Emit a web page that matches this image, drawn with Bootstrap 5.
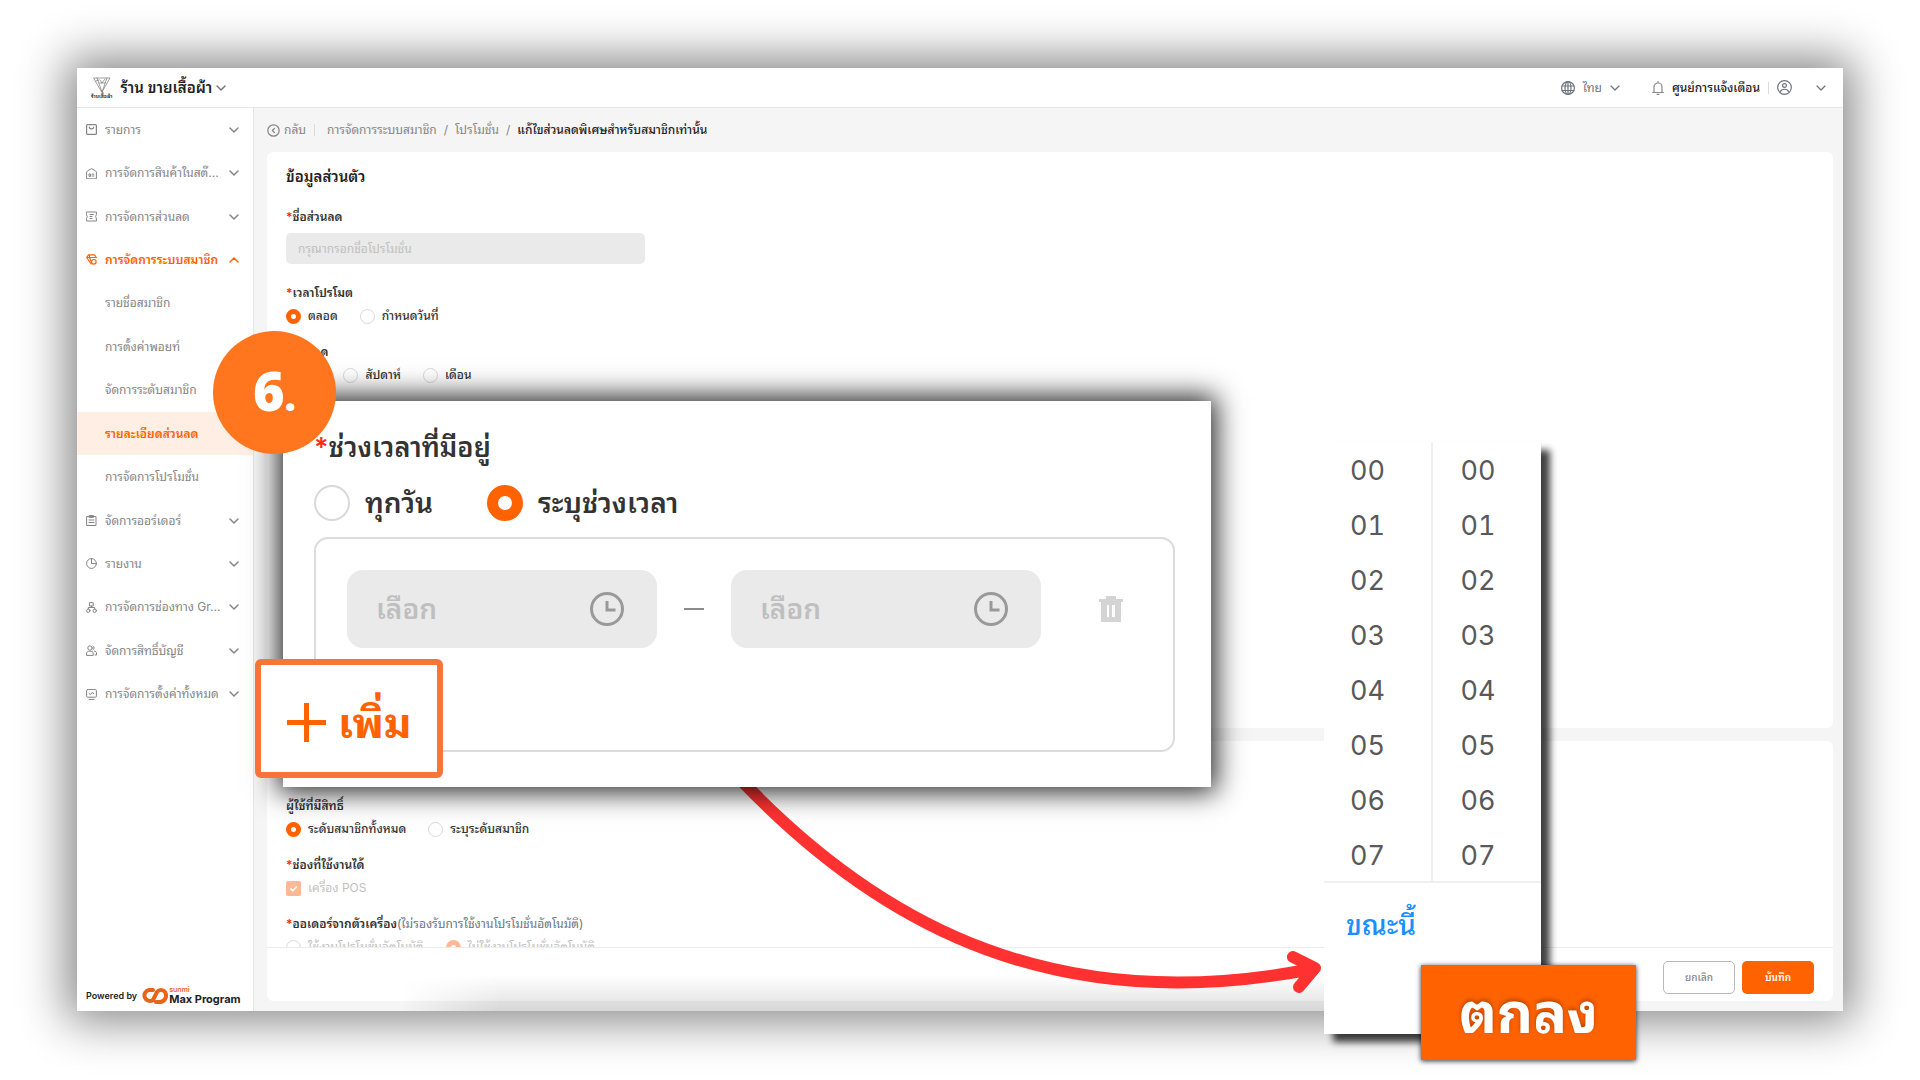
<!DOCTYPE html>
<html lang="th">
<head>
<meta charset="utf-8">
<meta name="viewport" content="width=device-width, initial-scale=1">
<title>แก้ไขส่วนลดพิเศษสำหรับสมาชิกเท่านั้น</title>
<link href="https://cdn.jsdelivr.net/npm/bootstrap@5.3.0/dist/css/bootstrap.min.css" rel="stylesheet">
<style>
:root { --brand: #ff6200; --ink: #333; --muted: #858585; --line: #e6e6e6; }
body { font-family: Inter, "Noto Sans Thai Looped", "Noto Looped Thai", Loma, "Noto Sans Thai", "Noto Sans", sans-serif; font-size: 12px; line-height: 20px; color: var(--ink); background: #fff; }
svg { fill: none; stroke: currentColor; stroke-width: 1.2; stroke-linecap: round; stroke-linejoin: round; flex: none; display: block; }
a { color: inherit; text-decoration: none; }
.stage { height: 100vh; padding: 68px 77px 69px; position: relative; overflow: hidden; }
.app-window { height: 100%; background: #f5f5f5; box-shadow: 0 0 44px 10px rgba(0,0,0,.48); }
.topbar { height: 40px; background: #fff; border-bottom: 1px solid var(--line); padding: 0 17px 0 14px; }
.shop-name { font-size: 15px; font-weight: 600; color: #222; }
.shop-tag { font-size: 5px; line-height: 6px; font-weight: 700; }
.notice { font-weight: 500; color: #222; }
.side { width: 177px; background: #fff; border-right: 1px solid var(--line); color: var(--muted); font-weight: 400; }
.side-list { height: 608px; }
.side-list li { flex: 1 1 0; }
.side-list a { height: 100%; padding: 0 14px 0 9px; gap: 8px; }
.side-list a.sub-item { padding-left: 28px; }
.side-list a.opened { color: var(--brand); font-weight: 600; }
.side-list a.current { background: #ffeee4; }
.side-list use { stroke-width: 1.5; }
.powered { padding: 0 8px 6px 9px; color: #222; font-size: 9px; font-weight: 600; line-height: 14px; white-space: nowrap; }
.maker { color: #e8641b; font-size: 7px; line-height: 6px; }
.product { font-size: 11px; line-height: 12px; font-weight: 700; }
.crumbs { height: 44px; padding-left: 13px; color: var(--muted); }
.crumbs .slash { margin: 0 7px; }
.crumbs .here { font-weight: 500; color: #222; }
.rule-v { width: 1px; height: 12px; background: #dcdcdc; }
.sheet { background: #fff; margin: 0 10px 0 13px; padding: 13px 19px 0; border-radius: 6px; }
.sheet-main { height: 576px; flex: none; }
.sheet-rest { margin-top: 13px; padding-top: 55px; border-radius: 6px 6px 0 0; flex: 1 1 0; min-height: 0; overflow: hidden; }
.sheet-foot { background: #fff; margin: 0 10px 10px 13px; padding: 5px 19px 0; height: 54px; flex: none; border-top: 1px solid #ececec; border-radius: 0 0 6px 6px; }
.sheet h1 { font-size: 15px; line-height: 24px; font-weight: 600; margin: 0 0 18px; color: #222; }
.group { border: 0; margin: 0 0 16px; padding: 0; }
.group > legend, .group > .cap { float: none; font-size: 12px; line-height: 20px; font-weight: 600; margin: 0 0 3px; display: block; }
.req { color: #ff2a1a; }
.text-in { width: 359px; height: 31px; border: 0; border-radius: 5px; background: #eaeaea; padding: 0 12px; margin: 6px 0 19px; display: block; }
.text-in::placeholder, .time-in input::placeholder { color: #bfbfbf; opacity: 1; }
.opts { gap: 22px; height: 20px; }
.opts label { gap: 7px; font-weight: 500; }
.opts .off { color: #bfbfbf; font-weight: 400; }
.dot { appearance: none; width: 15px; height: 15px; border: 1px solid #d9d9d9; border-radius: 50%; background: #fff; margin: 0; flex: none; }
.dot:checked { border: 5px solid var(--brand); }
.off .dot:checked { border-color: #ffb895; }
.tick { appearance: none; width: 15px; height: 15px; border-radius: 2px; margin: 0; flex: none; background: #ffb895 url("data:image/svg+xml,%3Csvg xmlns='http://www.w3.org/2000/svg' viewBox='0 0 15 15'%3E%3Cpath d='M4.5 7.5l2.3 2.3 4-4.3' fill='none' stroke='white' stroke-width='1.8'/%3E%3C/svg%3E"); }
.foot-btn { width: 72px; height: 33px; border-radius: 5px; font-size: 10px; font-weight: 500; padding: 0; }
.btn-plain { border: 1px solid #b9b9b9; color: var(--muted); background: #fff; margin-right: 7px; }
.btn-brand { background: var(--brand); color: #fff; border: 0; font-weight: 600; }
/* call-outs laid over the window */
.over { position: absolute; }
.haze { left: 400px; top: 975px; width: 924px; height: 36px; background: linear-gradient(rgba(0,0,0,0), rgba(0,0,0,.12)); -webkit-mask-image: linear-gradient(90deg, transparent, #000 100px); mask-image: linear-gradient(90deg, transparent, #000 100px); }
.arrow { left: 0; top: 0; width: 1920px; height: 1080px; stroke: #ff3131; stroke-width: 12; }
.zoom-pane { left: 283px; top: 401px; width: 928px; height: 386px; background: #fff; padding: 24px 36px 0 31px; box-shadow: 0 0 26px 5px rgba(0,0,0,.85); }
.zoom-title { font-size: 27px; line-height: 46px; font-weight: 600; margin: 0 0 14px; }
.zoom-opts { height: 36px; gap: 54px; margin-bottom: 16px; }
.zoom-opts label { gap: 15px; font-size: 28px; line-height: 36px; font-weight: 600; }
.zoom-opts .dot { width: 36px; height: 36px; border-width: 2px; }
.zoom-opts .dot:checked { border-width: 11px; }
.slot { height: 215px; border: 2px solid #dcdcdc; border-radius: 14px; padding: 31px; }
.time-in { width: 310px; height: 78px; border-radius: 16px; background: #eaeaea; padding: 0 33px 0 29px; color: #999; }
.time-in input { border: 0; background: none; min-width: 0; flex: 1; font-size: 28px; line-height: 40px; padding: 0; font-weight: 600; }
.dash { width: 20px; height: 2px; background: #8c8c8c; margin: 0 27px; }
.bin { border: 0; background: none; padding: 0; margin-left: 57px; color: #d4d4d4; }
.add-box { left: 255px; top: 659px; width: 188px; height: 119px; border: 6px solid #f97437; border-radius: 6px; background: #fff; color: var(--brand); font-size: 42px; line-height: 60px; font-weight: 700; padding: 8px 0 0 26px; gap: 12px; }
.step { left: 213px; top: 331px; width: 123px; height: 123px; border-radius: 50%; background: #ff761f; color: #fff; font-family: "Open Sans", sans-serif; font-size: 54px; line-height: 60px; font-weight: 800; }
.step small { font-size: 40px; }
.picker { left: 1324px; top: 442px; width: 217px; height: 592px; background: #fff; box-shadow: 9px 8px 7px rgba(0,0,0,.75); color: #595959; font-size: 27px; font-variant-numeric: tabular-nums; }
.picker-cols { height: 441px; border-bottom: 2px solid #f0f0f0; }
.picker-cols ul { flex: 1 1 0; padding: 1px 0 0 26px; line-height: 55px; }
.picker-cols ul + ul { border-left: 2px solid #f0f0f0; padding-left: 28px; }
.now { border: 0; background: none; color: #1890ff; font-size: 28px; line-height: 44px; font-weight: 500; padding: 0; margin: 20px 0 0 22px; }
.confirm { left: 1421px; top: 965px; width: 215px; height: 95px; border: 0; background: var(--brand); color: #fff; font-size: 56px; line-height: 80px; font-weight: 700; box-shadow: 0 1px 5px rgba(0,0,0,.8); text-shadow: 0 -2px 4px rgba(0,0,0,.3); padding: 0; }
</style>
</head>
<body>
<svg class="d-none" aria-hidden="true">
  <symbol id="down" viewBox="0 0 10 10"><path d="M1 3l4 4 4-4"/></symbol>
  <symbol id="up" viewBox="0 0 10 10"><path d="M1 7l4-4 4 4"/></symbol>
  <symbol id="clock" viewBox="0 0 34 34"><circle cx="17" cy="17" r="15.5"/><path d="M17 9v9h8.500" stroke-linecap="butt" stroke-linejoin="miter"/></symbol>
</svg>
<div class="stage">
  <div class="app-window d-flex flex-column">
    <header class="topbar d-flex align-items-center">
      <a href="#" class="d-flex align-items-center">
        <span class="d-flex flex-column align-items-center">
          <svg width="20" height="16" viewBox="0 0 20 16" color="#777"><path d="M2 1h16L10 15zM5 1l5 14 5-14M7 6l6 0M4 4l3-1M8 3l2 3 3-4" stroke-width=".7"/></svg>
          <span class="shop-tag">ร้านเสื้อผ้า</span>
        </span>
        <span class="shop-name ms-1 me-1 ps-1">ร้าน ขายเสื้อผ้า</span>
        <svg width="10" height="10" color="#777" style="stroke-width:1.5"><use href="#down"/></svg>
      </a>
      <nav class="d-flex align-items-center ms-auto">
        <a href="#" class="d-flex align-items-center text-secondary">
          <svg width="14" height="14" viewBox="0 0 14 14"><circle cx="7" cy="7" r="6.400"/><ellipse cx="7" cy="7" rx="3" ry="6.400"/><path d="M7 .6v12.800M1 5h12M1 9.500h12"/></svg>
          <span class="mx-2">ไทย</span>
          <svg width="10" height="10"><use href="#down"/></svg>
        </a>
        <a href="#" class="notice d-flex align-items-center ps-4 ms-2">
          <svg width="12" height="14" viewBox="0 0 12 14" color="#888"><path d="M.7 11.500h10.600M2 11.300V6a4 4 0 0 1 8 0v5.300M6 .5v1M5 13.300h2"/></svg>
          <span class="ms-2">ศูนย์การแจ้งเตือน</span>
        </a>
        <span class="rule-v ms-2 me-2"></span>
        <a href="#" class="d-flex align-items-center text-secondary" aria-label="บัญชี">
          <svg width="15" height="15" viewBox="0 0 15 15"><circle cx="7.500" cy="7.500" r="6.800"/><circle cx="7.500" cy="5.500" r="1.900"/><path d="M3.500 11.500c1-3 7-3 8 0"/></svg>
          <svg class="ms-4" width="10" height="10"><use href="#down"/></svg>
        </a>
      </nav>
    </header>
    <div class="d-flex flex-grow-1" style="min-height:0">
      <aside class="side d-flex flex-column flex-shrink-0">
        <ul class="side-list list-unstyled d-flex flex-column m-0">
          <li><a href="#" class="d-flex align-items-center"><svg width="11" height="11" viewBox="0 0 11 11"><rect x=".6" y=".6" width="9.800" height="9.800" rx="1"/><path d="M3.300 3c0 2.500 4.400 2.500 4.400 0"/></svg><span class="text-truncate">รายการ</span><svg class="ms-auto" width="10" height="10"><use href="#down"/></svg></a></li>
          <li><a href="#" class="d-flex align-items-center"><svg width="11" height="11" viewBox="0 0 11 11" style="stroke-width:1"><path d="M.6 10.400V4Q.6 3 5.500.6 10.400 3 10.400 4v6.400zM3 8V6h1.500v2zM6 6.200h2M6 8h2"/></svg><span class="text-nowrap">การจัดการสินค้าในสต๊...</span><svg class="ms-auto" width="10" height="10"><use href="#down"/></svg></a></li>
          <li><a href="#" class="d-flex align-items-center"><svg width="11" height="11" viewBox="0 0 11 11" style="stroke-width:1"><path d="M.6 1h9.800v2.500q-1.500 2 0 4v2.500H.6V7.500q1.500-2 0-4zM4 3.500h3.500M4 5.500h2M4 7.500h2"/></svg><span class="text-truncate">การจัดการส่วนลด</span><svg class="ms-auto" width="10" height="10"><use href="#down"/></svg></a></li>
          <li><a href="#" class="d-flex align-items-center opened"><svg width="11" height="11" viewBox="0 0 11 11"><path d="M2.500.8h6L10.300 3.500M2.500.8L.7 3.500l4.300 6.500M.7 3.500h9.500M3.500 3.500L5 7"/><circle cx="7.800" cy="7.800" r="2.300"/><path d="M3.500 1v2"/></svg><span class="text-nowrap">การจัดการระบบสมาชิก</span><svg class="ms-auto" width="10" height="10"><use href="#up"/></svg></a></li>
          <li><a href="#" class="d-flex align-items-center sub-item">รายชื่อสมาชิก</a></li>
          <li><a href="#" class="d-flex align-items-center sub-item">การตั้งค่าพอยท์</a></li>
          <li><a href="#" class="d-flex align-items-center sub-item">จัดการระดับสมาชิก</a></li>
          <li><a href="#" class="d-flex align-items-center sub-item opened current">รายละเอียดส่วนลด</a></li>
          <li><a href="#" class="d-flex align-items-center sub-item">การจัดการโปรโมชั่น</a></li>
          <li><a href="#" class="d-flex align-items-center"><svg width="11" height="11" viewBox="0 0 11 11" style="stroke-width:1"><path d="M1 1.500h9v9H1zM3.500.6h4v1.800h-4zM3 5h5M3 7.500h5"/></svg><span class="text-truncate">จัดการออร์เดอร์</span><svg class="ms-auto" width="10" height="10"><use href="#down"/></svg></a></li>
          <li><a href="#" class="d-flex align-items-center"><svg width="11" height="11" viewBox="0 0 11 11" style="stroke-width:1"><circle cx="5.500" cy="5.500" r="4.900"/><path d="M5.500.6v5h4.900"/></svg><span class="text-truncate">รายงาน</span><svg class="ms-auto" width="10" height="10"><use href="#down"/></svg></a></li>
          <li><a href="#" class="d-flex align-items-center"><svg width="11" height="11" viewBox="0 0 11 11" style="stroke-width:1"><rect x="3.800" y=".6" width="3.400" height="3.400"/><circle cx="2.300" cy="8.700" r="1.700"/><circle cx="8.700" cy="8.700" r="1.700"/><path d="M5.500 4v1.500M2.300 7V5.500h6.400V7"/></svg><span class="text-nowrap">การจัดการช่องทาง Gr...</span><svg class="ms-auto" width="10" height="10"><use href="#down"/></svg></a></li>
          <li><a href="#" class="d-flex align-items-center"><svg width="11" height="11" viewBox="0 0 11 11" style="stroke-width:1"><circle cx="4" cy="3" r="2.200"/><path d="M.6 10V8c0-2.500 6.600-2.500 6.600 0v2zM7 1.200a2 2 0 0 1 0 3.600M9 10h1.500V8c0-1-.8-1.700-2-1.800"/></svg><span class="text-truncate">จัดการสิทธิ์บัญชี</span><svg class="ms-auto" width="10" height="10"><use href="#down"/></svg></a></li>
          <li><a href="#" class="d-flex align-items-center"><svg width="11" height="11" viewBox="0 0 11 11" style="stroke-width:1"><rect x=".6" y=".6" width="9.800" height="7.600" rx="1"/><path d="M3 10.400h5M3 4.500l1.500 1.200L6 3.500l1.800 1"/></svg><span class="text-nowrap">การจัดการตั้งค่าทั้งหมด</span><svg class="ms-auto" width="10" height="10"><use href="#down"/></svg></a></li>
        </ul>
        <div class="powered d-flex align-items-center mt-auto">
          <span>Powered by</span>
          <svg class="ms-1" width="28" height="18" viewBox="0 0 28 18" color="#e8641b" style="stroke-width:4"><path d="M12 3H8a5.500 5.500 0 1 0 4 10l4-8a5 5 0 0 1 8 0c3 5-1 10-5 10h-4"/></svg>
          <span class="d-flex flex-column"><span class="maker">sunmi</span><span class="product">Max Program</span></span>
        </div>
      </aside>
      <main class="d-flex flex-column flex-grow-1" style="min-width:0">
        <nav class="crumbs d-flex align-items-center flex-shrink-0">
          <a href="#" class="d-flex align-items-center"><svg width="13" height="13" viewBox="0 0 13 13"><circle cx="6.500" cy="6.500" r="5.700"/><path d="M7.500 4.300L5.300 6.500l2.200 2.200"/></svg><span class="ms-1">กลับ</span></a>
          <span class="rule-v ms-2 me-2"></span>
          <a href="#" class="ps-1">การจัดการระบบสมาชิก</a><span class="slash">/</span>
          <a href="#">โปรโมชั่น</a><span class="slash">/</span>
          <span class="here">แก้ไขส่วนลดพิเศษสำหรับสมาชิกเท่านั้น</span>
        </nav>
        <section class="sheet sheet-main">
          <h1>ข้อมูลส่วนตัว</h1>
          <div class="group"><label class="cap" for="dname"><span class="req">*</span>ชื่อส่วนลด</label>
            <input id="dname" class="text-in" placeholder="กรุณากรอกชื่อโปรโมชั่น" disabled></div>
          <fieldset class="group"><legend><span class="req">*</span>เวลาโปรโมต</legend>
            <div class="opts d-flex"><label class="d-flex align-items-center"><input class="dot" type="radio" name="t" checked>ตลอด</label><label class="d-flex align-items-center"><input class="dot" type="radio" name="t">กำหนดวันที่</label></div></fieldset>
          <fieldset class="group"><legend><span class="req">*</span>ส่วนลด</legend>
            <div class="opts d-flex"><label class="d-flex align-items-center"><input class="dot" type="radio" name="p" checked>วัน</label><label class="d-flex align-items-center"><input class="dot" type="radio" name="p">สัปดาห์</label><label class="d-flex align-items-center"><input class="dot" type="radio" name="p">เดือน</label></div></fieldset>
        </section>
        <section class="sheet sheet-rest">
          <fieldset class="group"><legend>ผู้ใช้ที่มีสิทธิ์</legend>
            <div class="opts d-flex"><label class="d-flex align-items-center"><input class="dot" type="radio" name="u" checked>ระดับสมาชิกทั้งหมด</label><label class="d-flex align-items-center"><input class="dot" type="radio" name="u">ระบุระดับสมาชิก</label></div></fieldset>
          <fieldset class="group"><legend><span class="req">*</span>ช่องที่ใช้งานได้</legend>
            <div class="opts d-flex"><label class="d-flex align-items-center off"><input class="tick" type="checkbox" checked disabled>เครื่อง POS</label></div></fieldset>
          <fieldset class="group"><legend><span class="req">*</span>ออเดอร์จากตัวเครื่อง<span class="fw-normal text-secondary">(ไม่รองรับการใช้งานโปรโมชั่นอัตโนมัติ)</span></legend>
            <div class="opts d-flex"><label class="d-flex align-items-center off"><input class="dot" type="radio" name="o" disabled>ใช้งานโปรโมชั่นอัตโนมัติ</label><label class="d-flex align-items-center off"><input class="dot" type="radio" name="o" checked disabled>ไม่ใช้งานโปรโมชั่นอัตโนมัติ</label></div></fieldset>
        </section>
        <div class="sheet-foot d-flex align-items-center justify-content-end">
          <button type="button" class="btn foot-btn btn-plain">ยกเลิก</button>
          <button type="button" class="btn foot-btn btn-brand">บันทึก</button>
        </div>
      </main>
    </div>
  </div>

  <div class="over haze"></div>
  <svg class="over arrow" viewBox="0 0 1920 1080"><path d="M741 780C884 930 1060 1018 1312 969M1293 957L1315 968L1299 987"/></svg>

  <div class="over zoom-pane" role="radiogroup" aria-labelledby="ztitle">
    <div class="zoom-title" id="ztitle"><span class="req">*</span>ช่วงเวลาที่มีอยู่</div>
    <div class="zoom-opts d-flex align-items-center">
      <label class="d-flex align-items-center"><input class="dot" type="radio" name="z">ทุกวัน</label>
      <label class="d-flex align-items-center"><input class="dot" type="radio" name="z" checked>ระบุช่วงเวลา</label>
    </div>
    <div class="slot">
      <div class="d-flex align-items-center">
        <label class="time-in d-flex align-items-center"><input placeholder="เลือก" aria-label="เวลาเริ่ม" disabled><svg width="34" height="34" style="stroke-width:3"><use href="#clock"/></svg></label>
        <span class="dash"></span>
        <label class="time-in d-flex align-items-center"><input placeholder="เลือก" aria-label="เวลาสิ้นสุด" disabled><svg width="34" height="34" style="stroke-width:3"><use href="#clock"/></svg></label>
        <button type="button" class="bin" aria-label="ลบ"><svg width="26" height="26" viewBox="0 0 26 26" style="fill:currentColor;stroke:none"><path fill-rule="evenodd" d="M8 0h10v3h7v3h-2v20H3V6H1V3h7zM9 9v12h2V9zm5 0v12h3V9z"/></svg></button>
      </div>
    </div>
  </div>

  <button type="button" class="over add-box d-flex align-items-center"><svg width="39" height="39" viewBox="0 0 39 39" style="stroke-width:5;stroke-linecap:butt"><path d="M19.500 0v39M0 19.500h39"/></svg>เพิ่ม</button>
  <div class="over step d-flex align-items-center justify-content-center"><span>6<small>.</small></span></div>

  <div class="over picker">
    <div class="picker-cols d-flex">
      <ul class="list-unstyled m-0"><li>00</li><li>01</li><li>02</li><li>03</li><li>04</li><li>05</li><li>06</li><li>07</li></ul>
      <ul class="list-unstyled m-0"><li>00</li><li>01</li><li>02</li><li>03</li><li>04</li><li>05</li><li>06</li><li>07</li></ul>
    </div>
    <button type="button" class="now">ขณะนี้</button>
  </div>
  <button type="button" class="over confirm">ตกลง</button>
</div>
<script src="https://cdn.jsdelivr.net/npm/bootstrap@5.3.0/dist/js/bootstrap.bundle.min.js"></script>
</body>
</html>
